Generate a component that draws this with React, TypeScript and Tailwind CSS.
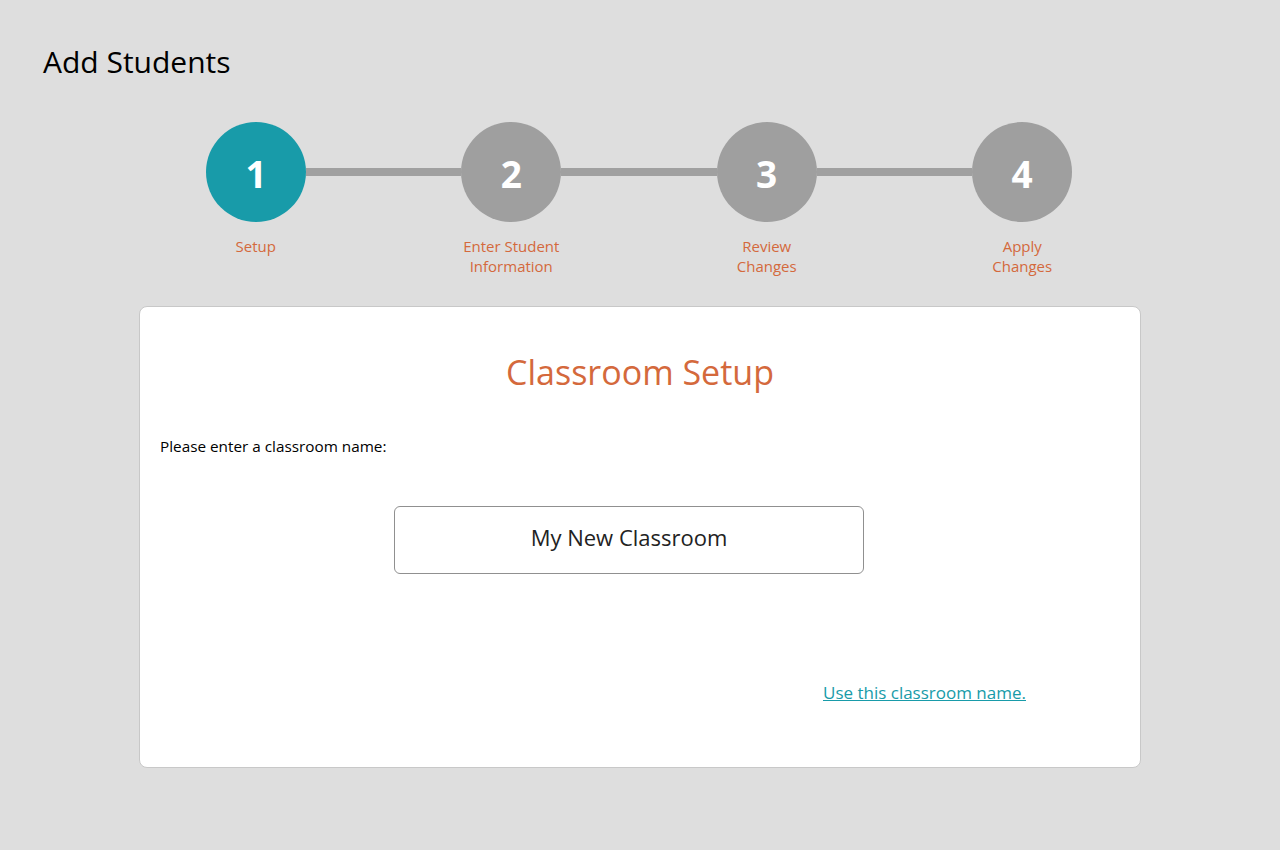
import React from 'react';

const steps = [
  { num: '1', label: ['Setup'], active: true },
  { num: '2', label: ['Enter Student', 'Information'], active: false },
  { num: '3', label: ['Review', 'Changes'], active: false },
  { num: '4', label: ['Apply', 'Changes'], active: false },
];

export default function App() {
  return (
    <div className="min-h-[850px] bg-[#dedede] font-['Open_Sans',sans-serif]">
      {/* Header */}
      <h1 className="pl-[43px] pt-[43px] text-[30px] leading-[38px] text-black">Add Students</h1>

      {/* Stepper */}
      <div className="mt-[41px] pl-[206px] pr-[208px]">
        <div className="flex items-center">
          {steps.map((s, i) => (
            <React.Fragment key={s.num}>
              {i > 0 && <div className="h-2 flex-1 bg-[#a0a0a0]" />}
              <div
                className={`flex h-[100px] w-[100px] shrink-0 items-center justify-center rounded-full pt-1 text-[37px] font-bold text-white ${
                  s.active ? 'bg-[#189ba9]' : 'bg-[#9f9f9f]'
                }`}
              >
                {s.num}
              </div>
            </React.Fragment>
          ))}
        </div>
      </div>
      <div className="ml-[128px] mr-[130px] mt-[14px] grid grid-cols-4">
        {steps.map((s) => (
          <div key={s.num} className="flex flex-col items-center text-[15px] leading-[20px] text-[#d4693c]">
            {s.label.map((l) => (
              <span key={l} className="block">
                {l}
              </span>
            ))}
          </div>
        ))}
      </div>

      {/* Card */}
      <div className="mx-auto mt-[30px] h-[462px] w-[1002px] rounded-lg border border-[#c8c8c8] bg-white px-5">
        <h2 className="pt-[44px] text-center text-[34px] leading-[42px] text-[#d4693c]">Classroom Setup</h2>
        <p className="mt-[43px] text-[15.3px] leading-5 text-black">Please enter a classroom name:</p>
        <div className="mt-[50px] flex justify-center">
          <div className="ml-[-22px] flex h-[68px] w-[470px] items-center justify-center rounded-md border border-[#909090] pb-[5px] text-[22px] text-[#222]">
            My New Classroom
          </div>
        </div>
        <div className="mt-[107px] flex justify-end pr-[94px]">
          <a href="#" className="text-[17px] leading-6 text-[#189ba9] underline">
            Use this classroom name.
          </a>
        </div>
      </div>
    </div>
  );
}
